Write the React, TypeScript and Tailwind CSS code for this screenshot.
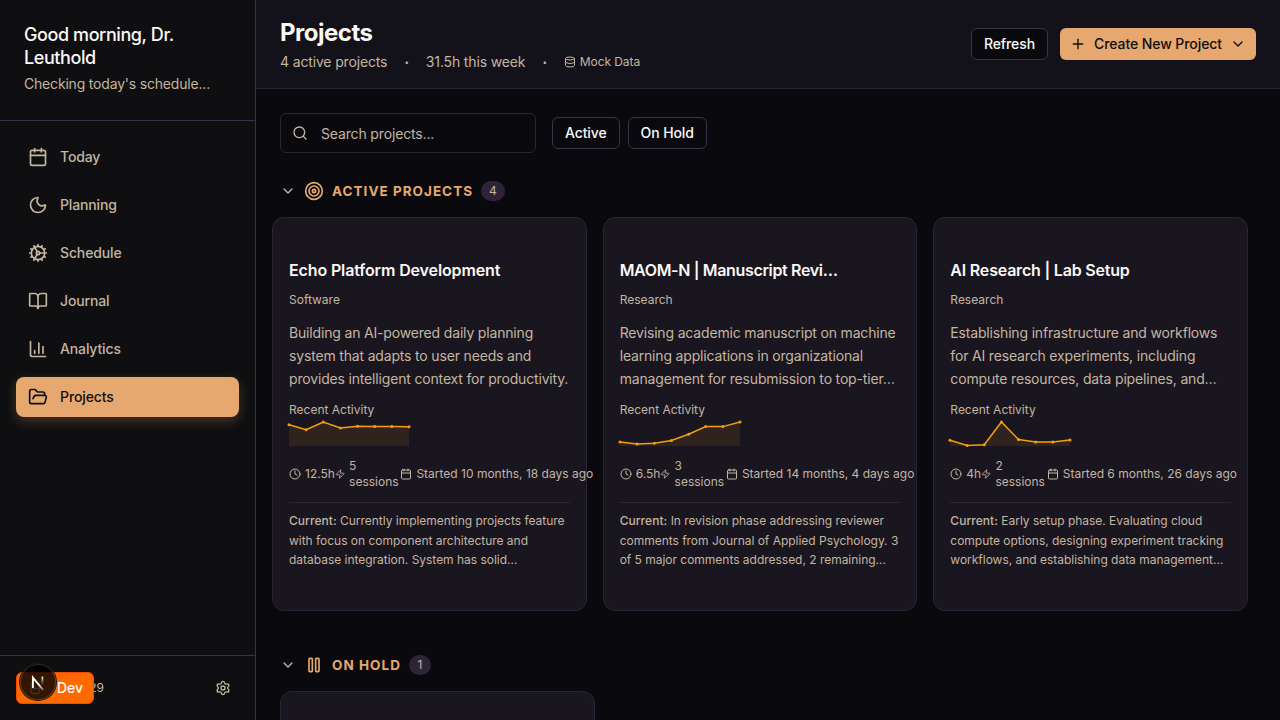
import type { ReactNode } from "react";
import {
  BookOpen,
  Calendar,
  ChartColumn,
  ChevronDown,
  Clock,
  Cog,
  Database,
  FolderOpen,
  Moon,
  Plus,
  Search,
  Settings,
  Target,
  Zap,
  type LucideIcon,
} from "lucide-react";

const NAV: { label: string; icon: LucideIcon; active?: boolean }[] = [
  { label: "Today", icon: Calendar },
  { label: "Planning", icon: Moon },
  { label: "Schedule", icon: Cog },
  { label: "Journal", icon: BookOpen },
  { label: "Analytics", icon: ChartColumn },
  { label: "Projects", icon: FolderOpen, active: true },
];

type Project = {
  title: string;
  titleTracking: string;
  category: string;
  description: string[];
  activity: number[];
  hours: string;
  sessions: number;
  started: string;
  current: string[];
};

const PROJECTS: Project[] = [
  {
    title: "Echo Platform Development",
    titleTracking: "tracking-[-0.13px]",
    category: "Software",
    description: [
      "Building an AI-powered daily planning",
      "system that adapts to user needs and",
      "provides intelligent context for productivity.",
    ],
    activity: [2.7, 7.8, 0, 6, 4.3, 4.5, 4.5, 4.8],
    hours: "12.5h",
    sessions: 5,
    started: "Started 10 months, 18 days ago",
    current: [
      "Currently implementing projects feature",
      "with focus on component architecture and",
      "database integration. System has solid…",
    ],
  },
  {
    title: "MAOM-N | Manuscript Revi…",
    titleTracking: "tracking-[-0.34px]",
    category: "Research",
    description: [
      "Revising academic manuscript on machine",
      "learning applications in organizational",
      "management for resubmission to top-tier…",
    ],
    activity: [20, 22, 21.3, 18.5, 12.3, 4.6, 4.6, 0],
    hours: "6.5h",
    sessions: 3,
    started: "Started 14 months, 4 days ago",
    current: [
      "In revision phase addressing reviewer",
      "comments from Journal of Applied Psychology. 3",
      "of 5 major comments addressed, 2 remaining…",
    ],
  },
  {
    title: "AI Research | Lab Setup",
    titleTracking: "tracking-[-0.2px]",
    category: "Research",
    description: [
      "Establishing infrastructure and workflows",
      "for AI research experiments, including",
      "compute resources, data pipelines, and…",
    ],
    activity: [18.3, 23.5, 22.7, 0, 17.6, 20, 20, 17.9],
    hours: "4h",
    sessions: 2,
    started: "Started 6 months, 26 days ago",
    current: [
      "Early setup phase. Evaluating cloud",
      "compute options, designing experiment tracking",
      "workflows, and establishing data management…",
    ],
  },
];

function Lines({ lines }: { lines: string[] }) {
  return lines.map((line, i) => (
    <span key={line}>
      {line}
      {i < lines.length - 1 && <br />}
    </span>
  ));
}

function PauseIcon() {
  return (
    <svg viewBox="0 0 24 24" className="size-5" fill="none" stroke="currentColor" strokeWidth="2">
      <rect x="6" y="4" width="4" height="16" rx="1" />
      <rect x="14" y="4" width="4" height="16" rx="1" />
    </svg>
  );
}

function Sparkline({ values }: { values: number[] }) {
  const pts = values.map((v, i) => [(i * 120) / 7, v]);
  const line = pts.map((p) => p.join(",")).join(" ");
  return (
    <svg width="120" height="24" className="block overflow-visible">
      <polygon points={`0,24 ${line} 120,24`} fill="#f59e0b" fillOpacity="0.1" />
      <polyline points={line} fill="none" stroke="#f59e0b" strokeWidth="1.5" />
      {pts.map(([x, y]) => (
        <circle key={x} cx={x} cy={y} r="1.5" fill="#f59e0b" />
      ))}
    </svg>
  );
}

function ProjectCard({ project }: { project: Project }) {
  return (
    <article className="h-[394px] min-w-0 rounded-xl border border-[#2a2535] bg-[#1a1620] px-4 pt-10 text-[#c4b5a0]">
      <h3 className="text-base font-semibold whitespace-nowrap text-[#faf8f5]">
        <span className={project.titleTracking}>{project.title}</span>
      </h3>
      <p className="mt-2.5 text-xs">{project.category}</p>
      <p className="mt-3.5 text-sm leading-[22.75px] tracking-[-0.17px] whitespace-nowrap">
        <Lines lines={project.description} />
      </p>
      <p className="mt-3 mb-1 text-xs">Recent Activity</p>
      <Sparkline values={project.activity} />
      <div className="mt-3 flex items-center justify-between text-xs">
        <div className="flex items-center gap-1">
          <Clock className="size-3" />
          <span>{project.hours}</span>
        </div>
        <div className="flex items-center gap-1">
          <Zap className="size-3" />
          <span>{project.sessions} sessions</span>
        </div>
        <div className="flex items-center gap-1">
          <Calendar className="size-3" />
          <span className="whitespace-nowrap">{project.started}</span>
        </div>
      </div>
      <p className="mt-3 border-t border-[#2a2535] pt-2 text-xs leading-[19.5px] tracking-[-0.02px] whitespace-nowrap">
        <span className="font-medium tracking-[0.05px]">Current:</span> <Lines lines={project.current} />
      </p>
    </article>
  );
}

function SectionHeader({ icon, title, count }: { icon: ReactNode; title: string; count: number }) {
  return (
    <div className="flex h-7 items-center">
      <ChevronDown className="size-4 text-[#c4b5a0]" />
      <span className="ml-2 text-[#e6a86e]">{icon}</span>
      <h2 className="ml-2 text-[13.5px] font-bold tracking-[1.02px] text-[#e6a86e]">{title}</h2>
      <span className="ml-2 flex h-5 min-w-[22px] items-center justify-center rounded-full bg-[#2d2438] px-2 text-xs text-[#c4b5a0]">
        {count}
      </span>
    </div>
  );
}

function Dot() {
  return <span className="flex w-[6.5px] justify-center pt-0.5 text-[8px]">•</span>;
}

function Sidebar() {
  return (
    <aside className="flex w-64 shrink-0 flex-col border-r border-[#3a3147] bg-[#0f0f11] text-[#c4b5a0]">
      <div className="h-[121px] border-b border-[#3a3147] px-6 pt-6">
        <h2 className="text-lg leading-[22.5px] font-medium tracking-[-0.41px] text-[#faf8f5]">
          Good morning, Dr.
          <br />
          Leuthold
        </h2>
        <p className="mt-[5px] text-sm tracking-[-0.19px]">Checking today's schedule...</p>
      </div>
      <nav className="flex flex-1 flex-col gap-2 p-4">
        {NAV.map(({ label, icon: Icon, active }) => (
          <a
            key={label}
            className={
              active
                ? "flex h-10 items-center gap-3 rounded-lg bg-[#e6a86e] px-3 text-sm font-medium tracking-[-0.1px] text-[#0f0f11] shadow-[0_4px_12px_rgba(230,168,110,0.25)]"
                : "flex h-10 items-center gap-3 rounded-lg px-3 text-sm font-medium tracking-[-0.14px]"
            }
          >
            <Icon className="size-5" />
            {label}
          </a>
        ))}
      </nav>
      <div className="relative flex h-[65px] items-center justify-between border-t border-[#3a3147] pr-6 pl-6">
        <span className="w-20 text-right text-xs">29</span>
        <Settings className="size-4" />
        <div className="absolute top-4 left-4 flex h-8 w-[78px] items-center justify-end rounded-md border border-[#f54900] bg-[#ff6900] pr-2.5 text-sm font-medium text-white">
          Dev
        </div>
        <div className="absolute top-2 left-5 size-9 rounded-full bg-black/80 shadow-[0_0_0_1px_#171717,inset_0_0_0_1px_rgba(255,255,255,0.14)]">
          <svg viewBox="0 0 36 36" className="size-9" fill="none">
            <path
              d="M11 18v9.5q0 2 2 2h4.5q2 0 2-2V18M11 24.5h8.5"
              stroke="#3d3026"
              strokeWidth="1.4"
            />
            <path d="M12.9 24V13.6L23.2 26" stroke="url(#fadeDown)" strokeWidth="1.9" />
            <path d="M22.4 12.6v8.2" stroke="url(#fadeBar)" strokeWidth="1.8" />
            <defs>
              <linearGradient id="fadeDown" x1="19" y1="20" x2="24" y2="26" gradientUnits="userSpaceOnUse">
                <stop stopColor="#fff" />
                <stop offset="1" stopColor="#fff" stopOpacity="0.3" />
              </linearGradient>
              <linearGradient id="fadeBar" x1="22" y1="12" x2="22" y2="21" gradientUnits="userSpaceOnUse">
                <stop stopColor="#fff" />
                <stop offset="1" stopColor="#fff" stopOpacity="0" />
              </linearGradient>
            </defs>
          </svg>
        </div>
      </div>
    </aside>
  );
}

export default function App() {
  const outline =
    "flex h-8 items-center rounded-md border border-[#3a3147] bg-[#0a0a0e] px-3 text-sm font-medium tracking-[-0.1px] text-[#faf8f5]";
  return (
    <div className="flex h-screen overflow-hidden bg-[#0a0a0e] font-['Inter',sans-serif] antialiased">
      <Sidebar />
      <main className="flex min-w-0 flex-1 flex-col">
        <header className="flex h-[89px] shrink-0 items-center justify-between border-b border-[#2a2535] bg-[#13111a] px-6">
          <div>
            <h1 className="pt-px text-2xl leading-8 font-bold tracking-[-0.5px] text-[#faf8f5]">Projects</h1>
            <div className="mt-[3px] flex h-5 items-center gap-4 text-sm tracking-[-0.15px] text-[#c4b5a0]">
              <span>4 active projects</span>
              <Dot />
              <span>31.5h this week</span>
              <Dot />
              <span className="flex items-center gap-1 text-xs tracking-[-0.08px]">
                <Database className="size-3" />
                Mock Data
              </span>
            </div>
          </div>
          <div className="flex items-center gap-3">
            <button className={outline}>Refresh</button>
            <button className="flex h-8 items-center gap-2 rounded-md bg-[#e6a86e] px-2.5 text-sm font-medium tracking-[-0.08px] text-[#0f0f11]">
              <Plus className="size-4" />
              Create New Project
              <ChevronDown className="size-4" />
            </button>
          </div>
        </header>
        <div className="flex items-center px-6 pt-6">
          <div className="flex h-10 w-64 items-center gap-[13px] rounded-md border border-[#2a2535] px-[11px] text-sm tracking-[-0.15px] text-[#c4b5a0]">
            <Search className="size-4" />
            <span className="pt-0.5">Search projects...</span>
          </div>
          <div className="ml-4 flex gap-2">
            <button className={outline}>Active</button>
            <button className={outline}>On Hold</button>
          </div>
        </div>
        <section className="pt-6 pr-8 pl-4">
          <div className="px-2">
            <SectionHeader icon={<Target className="size-5" />} title="ACTIVE PROJECTS" count={4} />
          </div>
          <div className="mt-3 grid grid-cols-3 gap-4">
            {PROJECTS.map((p) => (
              <ProjectCard key={p.title} project={p} />
            ))}
          </div>
        </section>
        <section className="px-6 pt-10">
          <SectionHeader icon={<PauseIcon />} title="ON HOLD" count={1} />
          <div className="mt-3 h-[394px] w-[315px] rounded-xl border border-[#2a2535] bg-[#1a1620]" />
        </section>
      </main>
    </div>
  );
}
